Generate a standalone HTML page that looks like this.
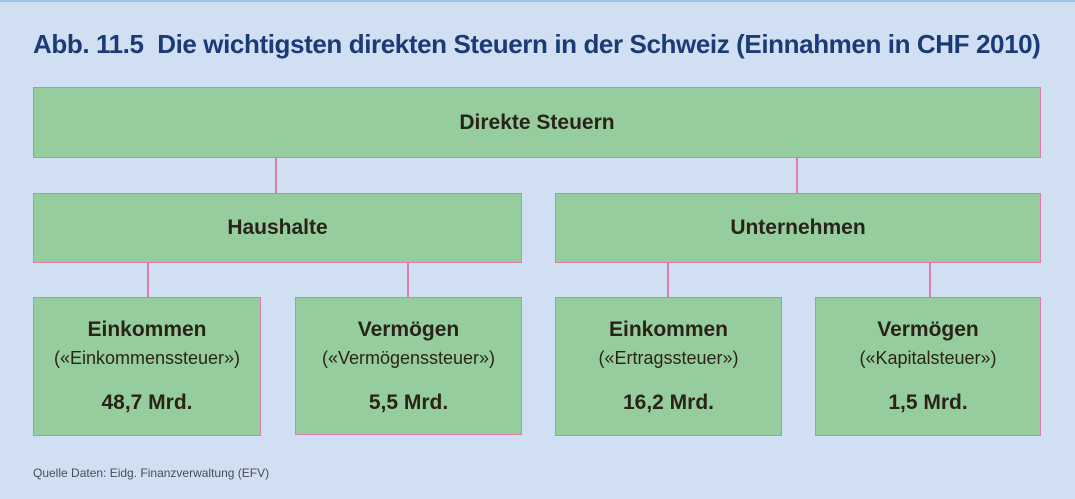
<!DOCTYPE html>
<html><head><style>
body{margin:0;width:1075px;height:499px;background:#d0dff2;position:relative;overflow:hidden;font-family:"Liberation Sans",sans-serif;}
.top{position:absolute;left:0;top:0;width:1075px;height:2px;background:#9cc3e4}
.t{position:absolute;left:33px;top:29px;font-size:26px;font-weight:bold;color:#1b3a78;white-space:nowrap;letter-spacing:-0.4px;transform-origin:0 0;}
.b{position:absolute;box-sizing:border-box;background:#96cd9e;border:1.5px solid #e27aaa;color:#2a2418;text-align:center}
.h{font-weight:bold;font-size:21px;display:flex;align-items:center;justify-content:center}
.l{position:absolute;width:1.5px;background:#e27aaa}
.n{font-weight:bold;font-size:21px;margin-top:20px}
.s{font-size:18px;margin-top:6px}
.a{font-weight:bold;font-size:21px;margin-top:22px}
.f{position:absolute;left:33px;top:466px;font-size:12px;color:#4a4a5a}
</style></head><body>
<div class="top"></div>
<div class="t">Abb. 11.5&nbsp; Die wichtigsten direkten Steuern in der Schweiz (Einnahmen in CHF 2010)</div>
<div class="b h" style="left:33px;top:87px;width:1008px;height:71px">Direkte Steuern</div>
<div class="l" style="left:275px;top:157px;height:36px"></div>
<div class="l" style="left:796px;top:157px;height:36px"></div>
<div class="b h" style="left:33px;top:193px;width:489px;height:70px">Haushalte</div>
<div class="b h" style="left:555px;top:193px;width:486px;height:70px">Unternehmen</div>
<div class="l" style="left:147px;top:262px;height:36px"></div>
<div class="l" style="left:407px;top:262px;height:36px"></div>
<div class="l" style="left:667px;top:262px;height:36px"></div>
<div class="l" style="left:929px;top:262px;height:36px"></div>
<div class="b" style="left:33px;top:297px;width:228px;height:139px"><div class="n">Einkommen</div><div class="s">(«Einkommenssteuer»)</div><div class="a">48,7 Mrd.</div></div>
<div class="b" style="left:295px;top:297px;width:227px;height:138px"><div class="n">Vermögen</div><div class="s">(«Vermögenssteuer»)</div><div class="a">5,5 Mrd.</div></div>
<div class="b" style="left:555px;top:297px;width:227px;height:139px"><div class="n">Einkommen</div><div class="s">(«Ertragssteuer»)</div><div class="a">16,2 Mrd.</div></div>
<div class="b" style="left:815px;top:297px;width:226px;height:139px"><div class="n">Vermögen</div><div class="s">(«Kapitalsteuer»)</div><div class="a">1,5 Mrd.</div></div>
<div class="f">Quelle Daten: Eidg. Finanzverwaltung (EFV)</div>
</body></html>
